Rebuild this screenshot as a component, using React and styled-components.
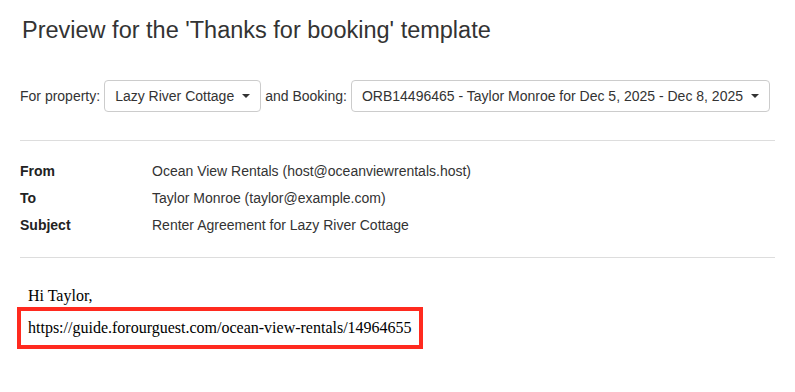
import React from 'react';
import styled, { createGlobalStyle } from 'styled-components';

const GlobalStyle = createGlobalStyle`
  html, body {
    margin: 0;
    padding: 0;
    background: #fff;
  }
  body {
    font-family: "Liberation Sans", Arial, Helvetica, sans-serif;
    font-size: 14px;
    color: #333;
  }
`;

const Page = styled.div`
  width: 755px;
  padding: 0 20px;
`;

const Title = styled.h3`
  margin: 14px 0 0 2px;
  font-size: 23.5px;
  font-weight: 400;
  line-height: 32px;
  color: #333;
`;

const SelectorRow = styled.div`
  display: flex;
  align-items: center;
  gap: 4px;
  margin-top: 34px;
  height: 32px;
`;

const Caption = styled.span`
  font-size: 14px;
  color: #333;
`;

const Dropdown = styled.button`
  display: inline-flex;
  align-items: center;
  gap: 8px;
  height: 32px;
  padding: 0 10px;
  background: #fff;
  border: 1px solid #ccc;
  border-radius: 4px;
  font-family: inherit;
  font-size: 14px;
  color: #333;
  cursor: pointer;
`;

const Caret = styled.span`
  display: inline-block;
  width: 0;
  height: 0;
  border-top: 4px solid #333;
  border-left: 4px solid transparent;
  border-right: 4px solid transparent;
`;

const Rule = styled.hr`
  margin: ${(p) => p.$top}px 0 0;
  border: 0;
  border-top: 1px solid #ddd;
`;

const Headers = styled.div`
  display: grid;
  grid-template-columns: 132px 1fr;
  padding-top: 17px;
`;

const HeaderLabel = styled.div`
  font-weight: 700;
  line-height: 27px;
  color: #222;
`;

const HeaderValue = styled.div`
  line-height: 27px;
  color: #333;
`;

const Body = styled.div`
  font-family: "Liberation Serif", "Times New Roman", serif;
  font-size: 16px;
  color: #000;
  padding: 28px 0 0 8px;
`;

const Greeting = styled.p`
  margin: 0;
  line-height: 20px;
`;

const Highlight = styled.div`
  display: inline-block;
  margin: 1px 0 0 -11px;
  padding: 8px 7px 8px 7px;
  border: 4px solid #ff2a1f;
  line-height: 18px;
`;

const headerRows = [
  ['From', 'Ocean View Rentals (host@oceanviewrentals.host)'],
  ['To', 'Taylor Monroe (taylor@example.com)'],
  ['Subject', 'Renter Agreement for Lazy River Cottage'],
];

export default function App() {
  return (
    <Page>
      <GlobalStyle />
      <Title>Preview for the 'Thanks for booking' template</Title>
      <SelectorRow>
        <Caption>For property:</Caption>
        <Dropdown>
          Lazy River Cottage <Caret />
        </Dropdown>
        <Caption>and Booking:</Caption>
        <Dropdown>
          ORB14496465 - Taylor Monroe for Dec 5, 2025 - Dec 8, 2025 <Caret />
        </Dropdown>
      </SelectorRow>
      <Rule $top={28} />
      <Headers>
        {headerRows.map(([label, value]) => (
          <React.Fragment key={label}>
            <HeaderLabel>{label}</HeaderLabel>
            <HeaderValue>{value}</HeaderValue>
          </React.Fragment>
        ))}
      </Headers>
      <Rule $top={18} />
      <Body>
        <Greeting>Hi Taylor,</Greeting>
        <Highlight>https://guide.forourguest.com/ocean-view-rentals/14964655</Highlight>
      </Body>
    </Page>
  );
}
